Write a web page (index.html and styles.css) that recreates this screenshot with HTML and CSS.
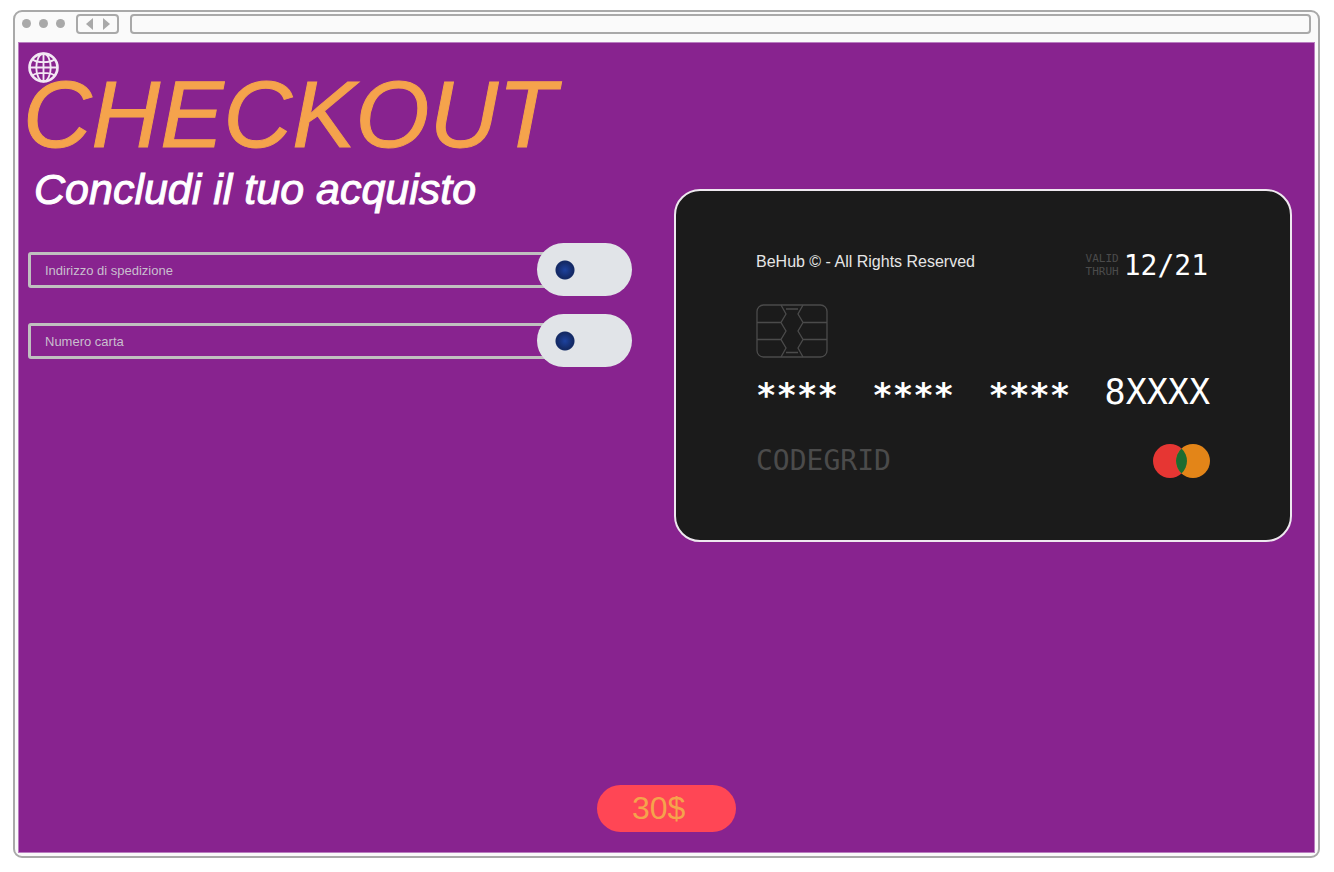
FILE: index.html
```html
<!DOCTYPE html>
<html lang="it">
<head>
<meta charset="utf-8">
<meta name="viewport" content="width=device-width, initial-scale=1">
<title>Checkout</title>
<link rel="stylesheet" href="styles.css">
</head>
<body>
<div class="browser">
  <header class="toolbar">
    <span class="dots"><i></i><i></i><i></i></span>
    <nav class="history" aria-label="Cronologia">
      <button type="button" aria-label="Indietro"><svg width="7" height="12" viewBox="0 0 7 12"><path d="M7 0v12L0 6z" fill="#a9a9a9"/></svg></button>
      <button type="button" aria-label="Avanti"><svg width="7" height="12" viewBox="0 0 7 12"><path d="M0 0v12l7-6z" fill="#a9a9a9"/></svg></button>
    </nav>
    <input class="address" type="text" aria-label="Indirizzo web">
  </header>
  <main class="screen">
    <div class="columns">
      <section class="order">
        <svg class="globe" viewBox="0 0 30 30" fill="none" stroke="#f3e8f4" stroke-width="1.8">
          <circle cx="15" cy="15" r="13.500" stroke-width="2.6"/>
          <ellipse cx="15" cy="15" rx="7" ry="13.5"/>
          <path d="M15 1.5v27M1.5 15h27M4.5 7.3c4 3.400 17 3.400 21 0M4.5 22.7c4-3.400 17-3.400 21 0"/>
        </svg>
        <h1 class="title">CHECKOUT</h1>
        <p class="subtitle">Concludi il tuo acquisto</p>
        <form class="fields" id="checkout">
          <div class="field">
            <input class="field-text" type="text" placeholder="Indirizzo di spedizione" aria-label="Indirizzo di spedizione">
            <input class="toggle" type="checkbox" role="switch" aria-label="Conferma indirizzo">
          </div>
          <div class="field">
            <input class="field-text" type="text" placeholder="Numero carta" aria-label="Numero carta">
            <input class="toggle" type="checkbox" role="switch" aria-label="Conferma carta">
          </div>
        </form>
      </section>
      <section class="card" aria-label="Carta di credito">
        <div class="card-row card-top">
          <span class="issuer">BeHub © - All Rights Reserved</span>
          <span class="expiry"><span class="valid">VALID<br>THRUH</span><span class="date">12/21</span></span>
        </div>
        <svg class="chip" viewBox="0 0 72 54" fill="none" stroke="#4b4b4b" stroke-width="1.3">
          <rect x="1" y="1" width="70" height="52" rx="6.5"/>
          <path d="M25 1l5 9-5 8.500 5 8.500-5 8.500 5 8.500-5 9M47 1l-5 9 5 8.500-5 8.500 5 8.500-5 8.500 5 9M1 18.500h24M1 35.500h24M47 18.500h24M47 35.500h24M30 5h12M30 48.500h12"/>
        </svg>
        <div class="card-row number">
          <span class="stars">****</span><span class="stars">****</span><span class="stars">****</span><span class="digits">8XXXX</span>
        </div>
        <div class="card-row card-bottom">
          <span class="holder">CODEGRID</span>
          <svg class="brand" viewBox="0 0 57 34">
            <circle cx="17" cy="17" r="17" fill="#e63633"/>
            <circle cx="40" cy="17" r="17" fill="#e38518"/>
            <path d="M28.500 4.500a17 17 0 0 1 0 25a17 17 0 0 1 0-25z" fill="#1d6c30"/>
          </svg>
        </div>
      </section>
    </div>
    <button class="price" type="submit" form="checkout">30$</button>
  </main>
</div>
</body>
</html>
```
FILE: styles.css
```css
* { box-sizing: border-box; }

body {
  display: flex;
  min-height: 100vh;
  margin: 0;
  padding: 10px 14px 14px 13px;
  background: #fff;
  font-family: "Liberation Sans", Arial, sans-serif;
}

.browser {
  display: flex;
  flex: 1;
  flex-direction: column;
  min-width: 0;
  padding: 0 3px 3px;
  border: 2px solid #a9a9a9;
  border-radius: 9px;
  background: #fafafa;
}

.toolbar {
  display: flex;
  align-items: flex-start;
  height: 30px;
  padding: 2px 4px 0;
}

.dots { display: flex; gap: 8px; padding-top: 5px; }
.dots i { width: 9px; height: 9px; border-radius: 50%; background: #a9a9a9; }

.history {
  display: flex;
  justify-content: center;
  align-items: center;
  gap: 10px;
  width: 43px;
  height: 20px;
  margin: 0 11px;
  border: 2px solid #a9a9a9;
  border-radius: 4px;
}
.history button { display: flex; padding: 0; border: 0; background: none; }

.address {
  flex: 1;
  min-width: 0;
  height: 20px;
  border: 2px solid #a9a9a9;
  border-radius: 4px;
  background: #fafafa;
}

.screen {
  display: flex;
  flex: 1;
  flex-direction: column;
  justify-content: space-between;
  align-items: center;
  padding: 9px 22px 20px 9px;
  border: 1px solid #b97dc0;
  background: #88238f;
}

.columns {
  display: grid;
  grid-template-columns: 604fr 618fr;
  gap: 42px;
  width: 100%;
}

.order { min-width: 0; }

.globe { display: block; width: 31px; height: 31px; }

.title {
  position: relative;
  margin: -17px 0 0 -5px;
  color: #f5a34c;
  font-size: 95px;
  font-style: italic;
  font-weight: 400;
  line-height: 96px;
  -webkit-text-stroke: 1px #f5a34c;
}

.subtitle {
  margin: 3px 0 0 6px;
  color: #fff;
  font-size: 43px;
  font-style: italic;
  line-height: 48px;
  -webkit-text-stroke: 1px #fff;
}

.fields { display: grid; gap: 18px; margin-top: 30px; }
.field { display: flex; align-items: center; }

.field-text {
  flex: 1;
  min-width: 0;
  height: 36px;
  padding: 2px 14px 0;
  border: 3px solid #c0c0c0;
  border-radius: 3px;
  background: transparent;
  color: #c9bfce;
  font-family: inherit;
  font-size: 13px;
}
.field-text::placeholder { color: #c9bfce; opacity: 1; }

.toggle {
  width: 95px;
  height: 53px;
  margin: 0 0 0 -24px;
  border-radius: 27px;
  appearance: none;
  background: radial-gradient(circle at 28px 27px, #1d429f 0, #142a66 8px, #142a66 9px, #e1e4e8 10px);
}

.card {
  display: flex;
  flex-direction: column;
  align-self: start;
  min-width: 0;
  margin-top: 137px;
  padding: 61px 80px 62px;
  border: 2px solid #eee8ef;
  border-radius: 26px;
  background: #1b1b1b;
  font-family: "DejaVu Sans Mono", monospace;
}

.card-row { display: flex; justify-content: space-between; }

.card-top { height: 26px; }
.issuer {
  color: #e6e6e6;
  font-family: "Liberation Sans", Arial, sans-serif;
  font-size: 16px;
  line-height: 20px;
}
.expiry { display: flex; align-items: center; gap: 5px; padding-right: 2px; }
.valid { color: #4b4b4b; font-size: 11px; line-height: 13px; }
.date { padding-top: 2px; color: #fff; font-size: 28px; line-height: 26px; }

.chip { width: 72px; height: 54px; margin-top: 26px; }

.number { margin-top: 17px; color: #fff; font-size: 35px; line-height: 34px; }
.stars { height: 34px; padding-top: 3px; font-size: 34px; font-weight: 700; }

.card-bottom { align-items: center; margin-top: 35px; }
.holder { color: #4b4b4b; font-size: 28px; line-height: 34px; }
.brand { width: 57px; height: 34px; }

.price {
  width: 139px;
  height: 47px;
  padding: 0 0 0 35px;
  margin-left: 13px;
  border: 0;
  border-radius: 24px;
  background: #ff4655;
  color: #f5a34c;
  font-family: inherit;
  font-size: 32px;
  text-align: left;
}

@media (max-width: 1000px) {
  .columns { grid-template-columns: 1fr; }
  .card { margin-top: 0; padding: 40px 24px; }
  .number { flex-wrap: wrap; }
  .title { font-size: 64px; }
  .price { margin-top: 24px; }
}
```
